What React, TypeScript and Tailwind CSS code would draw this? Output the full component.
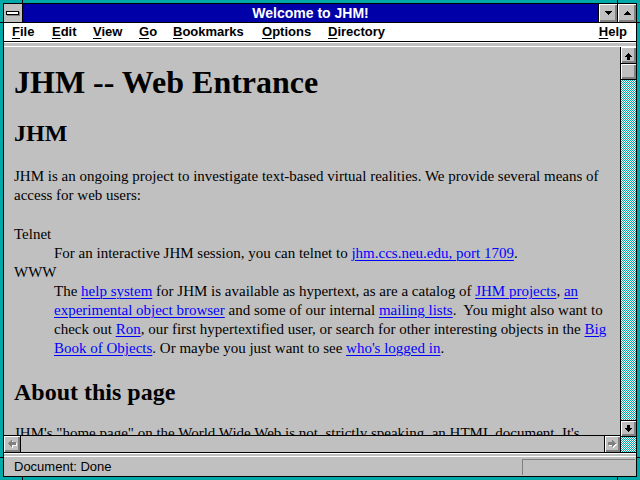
import React from "react";

type Row = [number, number, number];

// draws little pixel shapes row by row: [y, x, width]
function Pixels({ rows, color, dx = 0, dy = 0 }: { rows: Row[]; color: string; dx?: number; dy?: number }) {
  return (
    <>
      {rows.map(([y, x, len], i) => (
        <rect key={i} x={x + dx} y={y + dy} width={len} height={1} fill={color} />
      ))}
    </>
  );
}

function Glyph({ w, h, children }: { w: number; h: number; children: React.ReactNode }) {
  return (
    <svg width={w} height={h} viewBox={`0 0 ${w} ${h}`} shapeRendering="crispEdges" className="block">
      {children}
    </svg>
  );
}

const triDown: Row[] = [[7, 6, 7], [8, 7, 5], [9, 8, 3], [10, 9, 1]];
const triUp: Row[] = [[7, 9, 1], [8, 8, 3], [9, 7, 5], [10, 6, 7]];
const arrowUp: Row[] = [[6, 7, 1], [7, 6, 3], [8, 5, 5], [9, 4, 7], [10, 6, 3], [11, 6, 3], [12, 6, 3]];
const arrowDown: Row[] = [[4, 6, 3], [5, 6, 3], [6, 6, 3], [7, 4, 7], [8, 5, 5], [9, 6, 3], [10, 7, 1]];
const arrowRight: Row[] = [[4, 7, 1], [5, 7, 2], [6, 3, 7], [7, 3, 8], [8, 3, 7], [9, 7, 2], [10, 7, 1]];
const arrowLeft: Row[] = [[4, 7, 1], [5, 6, 2], [6, 5, 7], [7, 4, 8], [8, 5, 7], [9, 6, 2], [10, 7, 1]];

const bevel = "bg-[#c0c0c0] shadow-[inset_1px_1px_0_#ffffff,inset_-2px_-2px_0_#808080]";
const dither = "bg-[image:repeating-conic-gradient(#00a8a8_0_25%,#ffffff_0_50%)] bg-[length:2px_2px]";

function Mnemonic({ label }: { label: string }) {
  return (
    <>
      <span className="underline underline-offset-[2px] decoration-[1px]">{label[0]}</span>
      {label.slice(1)}
    </>
  );
}

function A({ children }: { children: React.ReactNode }) {
  return <a className="text-[#0000ff] underline underline-offset-[2px] decoration-[1px]">{children}</a>;
}

const menus = [
  { label: "File", w: "w-[40px]" },
  { label: "Edit", w: "w-[41px]" },
  { label: "View", w: "w-[46px]" },
  { label: "Go", w: "w-[34px]" },
  { label: "Bookmarks", w: "w-[89px]" },
  { label: "Options", w: "w-[66px]" },
  { label: "Directory", w: "w-[80px]" },
];

export default function App() {
  return (
    <div className="relative w-[640px] h-[480px] bg-[#00a8a8] p-[3px] overflow-hidden font-['Liberation_Sans',Arial,sans-serif]">
      <div className="h-full w-full border border-black flex flex-col bg-[#c0c0c0]">
        {/* title bar */}
        <div className="h-[19px] flex border-b border-black shrink-0">
          <div className="w-[19px] border-r border-black bg-[#c0c0c0] flex items-center justify-center">
            <div className="w-[13px] h-[4px] border border-black bg-white shadow-[1px_1px_0_#808080] -ml-[1px]" />
          </div>
          <div className="flex-1 bg-[#0000a8] text-white text-[14px] font-bold leading-[18px] text-center">
            Welcome to JHM!
          </div>
          <div className="w-px bg-black" />
          <div className={`w-[18px] ${bevel}`}>
            <Glyph w={18} h={18}>
              <Pixels rows={triDown} color="#000" />
            </Glyph>
          </div>
          <div className="w-px bg-black" />
          <div className={`w-[18px] ${bevel}`}>
            <Glyph w={18} h={18}>
              <Pixels rows={triUp} color="#000" />
            </Glyph>
          </div>
        </div>

        {/* menu bar */}
        <div className="h-[19px] flex bg-white border-b border-black text-[13px] font-bold leading-[18px] text-black pl-[8px] pr-[9px] shrink-0">
          {menus.map((m) => (
            <div key={m.label} className={m.w}>
              <Mnemonic label={m.label} />
            </div>
          ))}
          <div className="ml-auto">
            <Mnemonic label="Help" />
          </div>
        </div>
        <div className="h-[5px] bg-[#c0c0c0] border-t border-white border-b border-black shrink-0" />

        {/* document + scrollbars */}
        <div className="flex-1 flex min-h-0">
          <div className="flex-1 flex flex-col min-w-0">
            <div className="flex-1 overflow-hidden bg-[#c0c0c0] pl-[10px] pt-[17px] text-black font-['Liberation_Serif','Times_New_Roman',serif] whitespace-nowrap">
              <h1 className="text-[32px] font-bold leading-[37px]">JHM -- Web Entrance</h1>
              <h2 className="mt-[18px] text-[24px] font-bold leading-[28px]">JHM</h2>
              <p className="mt-[20px] text-[15px] leading-[19px]">
                JHM is an ongoing project to investigate text-based virtual realities. We provide several means of
                <br />
                access for web users:
              </p>
              <dl className="mt-[20px] text-[15px] leading-[19px]">
                <dt>Telnet</dt>
                <dd className="pl-[40px]">
                  For an interactive JHM session, you can telnet to <A>jhm.ccs.neu.edu, port 1709</A>.
                </dd>
                <dt>WWW</dt>
                <dd className="pl-[40px]">
                  The <A>help system</A> for JHM is available as hypertext, as are a catalog of <A>JHM projects</A>, <A>an</A>
                  <br />
                  <A>experimental object browser</A> and some of our internal <A>mailing lists</A>.&nbsp; You might also want to
                  <br />
                  check out <A>Ron</A>, our first hypertextified user, or search for other interesting objects in the <A>Big</A>
                  <br />
                  <A>Book of Objects</A>. Or maybe you just want to see <A>who's logged in</A>.
                </dd>
              </dl>
              <h2 className="mt-[20px] text-[24px] font-bold leading-[28px]">About this page</h2>
              <p className="mt-[18px] text-[15px] leading-[19px]">
                JHM's "home page" on the World Wide Web is not, strictly speaking, an HTML document. It's
              </p>
            </div>

            {/* horizontal scrollbar */}
            <div className="h-[17px] flex border-t border-black shrink-0">
              <div className={`w-[16px] ${bevel}`}>
                <Glyph w={16} h={15}>
                  <Pixels rows={arrowLeft} color="#ffffff" dx={1} dy={1} />
                  <Pixels rows={arrowLeft} color="#808080" />
                </Glyph>
              </div>
              <div className="w-px bg-black" />
              <div className="flex-1 bg-[#c0c0c0]" />
              <div className="w-px bg-black" />
              <div className={`w-[15px] ${bevel}`}>
                <Glyph w={15} h={15}>
                  <Pixels rows={arrowRight} color="#ffffff" dx={1} dy={1} />
                  <Pixels rows={arrowRight} color="#808080" />
                </Glyph>
              </div>
            </div>
            <div className="h-px bg-black shrink-0" />
          </div>

          {/* vertical scrollbar */}
          <div className="w-[16px] border-l border-black flex flex-col shrink-0">
            <div className={`h-[16px] ${bevel}`}>
              <Glyph w={15} h={16}>
                <Pixels rows={arrowUp} color="#000" />
              </Glyph>
            </div>
            <div className="h-px bg-black" />
            <div className={`h-[15px] ${bevel}`} />
            <div className="h-px bg-black" />
            <div className={`flex-1 ${dither}`} />
            <div className="h-px bg-black" />
            <div className={`h-[15px] ${bevel}`}>
              <Glyph w={15} h={15}>
                <Pixels rows={arrowDown} color="#000" />
              </Glyph>
            </div>
            <div className="h-px bg-black" />
            <div className={`h-[15px] ${dither}`} />
            <div className="h-px bg-black" />
          </div>
        </div>

        {/* status bar */}
        <div className="h-[4px] bg-[#c0c0c0] border-t border-white border-b border-black shrink-0" />
        <div className="h-[19px] flex items-start bg-[#c0c0c0] shrink-0">
          <div className="ml-[10px] text-[13px] leading-[19px] text-black">Document: Done</div>
          <div className="ml-auto mr-[1px] mt-[2px] w-[113px] h-[16px] border-t border-l border-[#808080] border-r-white border-b-white" />
        </div>
      </div>

      {/* frame resize corner marks */}
      <div className="absolute left-[22px] top-0 w-px h-[3px] bg-black" />
      <div className="absolute left-[617px] top-0 w-px h-[3px] bg-black" />
      <div className="absolute left-[22px] bottom-0 w-px h-[3px] bg-black" />
      <div className="absolute left-[617px] bottom-0 w-px h-[3px] bg-black" />
      <div className="absolute left-0 top-[22px] w-[3px] h-px bg-black" />
      <div className="absolute right-0 top-[22px] w-[3px] h-px bg-black" />
      <div className="absolute left-0 top-[457px] w-[3px] h-px bg-black" />
      <div className="absolute right-0 top-[457px] w-[3px] h-px bg-black" />
    </div>
  );
}
